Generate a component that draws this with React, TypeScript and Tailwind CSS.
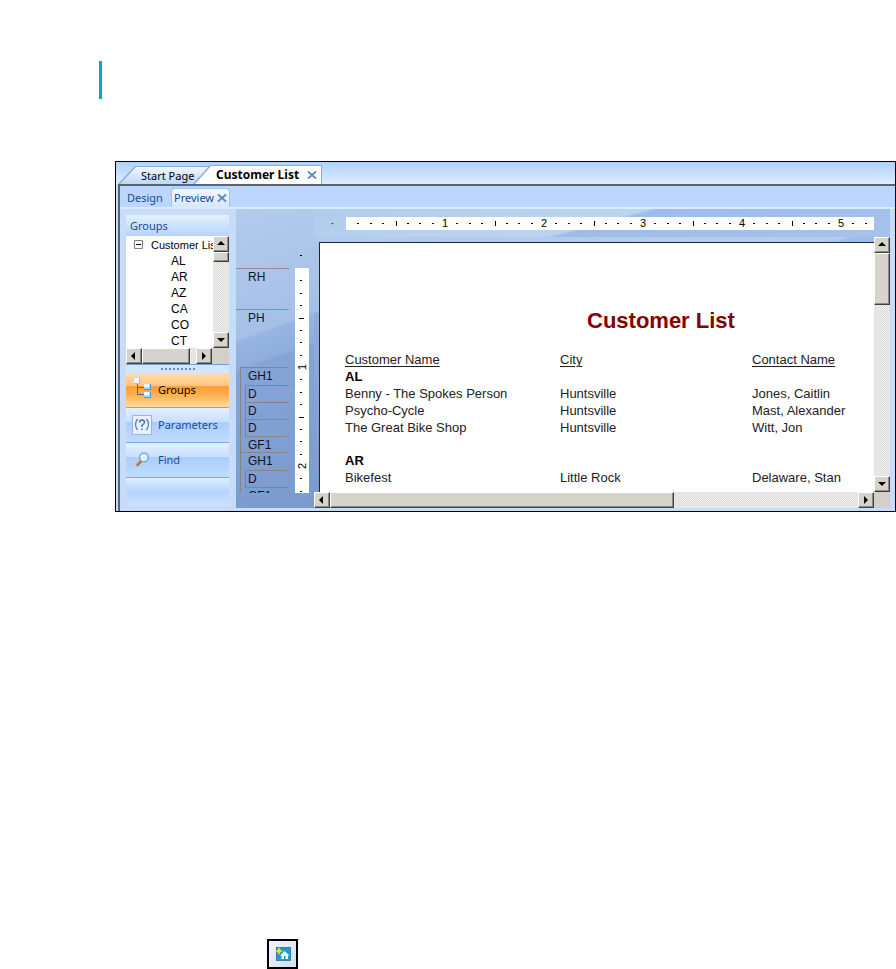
import type { ReactNode } from "react";
import clsx from "clsx";

const STATES = ["AL", "AR", "AZ", "CA", "CO", "CT"];

const REPORT = [
  {
    state: "AL",
    customers: [
      ["Benny - The Spokes Person", "Huntsville", "Jones, Caitlin"],
      ["Psycho-Cycle", "Huntsville", "Mast, Alexander"],
      ["The Great Bike Shop", "Huntsville", "Witt, Jon"],
    ],
  },
  {
    state: "AR",
    customers: [["Bikefest", "Little Rock", "Delaware, Stan"]],
  },
];

const INCH = 99;

export default function App() {
  return (
    <div className="bg-white font-['Noto_Sans','Open_Sans',sans-serif] text-[11px] leading-4 text-black">
      <div className="pt-[61px] pl-[99px]">
        <div className="w-[3px] h-[38px] bg-[#0ba3d4]" />
      </div>

      <main className="mt-[62px] ml-[115px] border border-black bg-[#c4dcfb]">
        <DocumentTabs />
        <div className="ml-0.5 border-t-2 border-l-2 border-[#5c6470]">
          <ViewTabs />
          <div className="flex border-t-2 border-[#dceafe] bg-[#c6dcf8] pr-[5px] pb-[3px]">
            <Sidebar />
            <Canvas />
          </div>
        </div>
      </main>

      <div className="mt-[427px] ml-[267px]">
        <button
          type="button"
          aria-label="Insert picture"
          className="flex w-[31px] h-[30px] items-center justify-center border-2 border-black bg-linear-to-br from-[#f2f6fd] to-[#cfdff5]"
        >
          <PictureIcon />
        </button>
      </div>
    </div>
  );
}

/* ── Tabs ────────────────────────────────────────────────────── */

function DocumentTabs() {
  return (
    <div className="flex h-[22px] items-end bg-linear-to-b from-[#aed2fd] to-[#deecff] pl-0.5">
      <button
        type="button"
        className="h-[18px] w-[99px] bg-[#86aee0] pt-px [clip-path:polygon(17px_0,92px_0,100%_100%,0_100%)]"
      >
        <span className="flex h-full items-center bg-linear-to-b from-[#f4f8ff] to-[#bcd8fb] pl-[23px] [clip-path:polygon(18px_0,91px_0,100%_100%,2px_100%)]">
          Start Page
        </span>
      </button>
      <div className="z-10 -ml-6 h-[19px] w-[129px] bg-[#86aee0] pt-px pr-px [clip-path:polygon(17px_0,100%_0,100%_100%,0_100%)]">
        <div className="flex h-full items-center justify-between bg-white pr-1 pl-[23px] [clip-path:polygon(18px_0,100%_0,100%_100%,2px_100%)]">
          <button type="button" className="text-[12px] font-bold">Customer List</button>
          <CloseButton label="Close Customer List" />
        </div>
      </div>
    </div>
  );
}

function ViewTabs() {
  return (
    <div className="flex h-[21px] items-end bg-[#bbd7ff] pl-[7px] text-[#1d4a94]">
      <button type="button" className="h-[18px] w-11 text-left">Design</button>
      <div className="flex h-[19px] w-[59px] items-center justify-between rounded-t-sm border border-b-0 border-[#9cc7ee] bg-linear-to-b from-[#f4f9ff] to-[#d5e7fd] px-0.5">
        <button type="button">Preview</button>
        <CloseButton label="Close Preview" />
      </div>
    </div>
  );
}

function CloseButton({ label }: { label: string }) {
  return (
    <button type="button" aria-label={label} className="text-[#5f86c0]">
      <svg className="size-[10px]" viewBox="0 0 10 10" stroke="currentColor" strokeWidth="1.7">
        <path d="M1 1.5 9 8.5M9 1.5 1 8.5" />
      </svg>
    </button>
  );
}

/* ── Sidebar ─────────────────────────────────────────────────── */

function Sidebar() {
  return (
    <aside className="flex w-[116px] shrink-0 flex-col pt-1.5 pr-[7px] pb-0.5 pl-1.5">
      <h2 className="flex h-[21px] items-center bg-linear-to-b from-[#e6f1ff] to-[#b5d3ff] pl-1 text-[#1d4a94]">
        Groups
      </h2>
      <div className="flex h-28 bg-white font-['Liberation_Sans',Arial,sans-serif] text-[12px]">
        <ul className="min-w-0 flex-1 overflow-hidden">
          <li>
            <div className="flex h-[17px] items-center gap-2 pl-2 text-[11px] whitespace-nowrap">
              <svg className="size-[9px] shrink-0" viewBox="0 0 9 9" fill="none">
                <path d="M.5.5h8v8h-8z" stroke="#808080" />
                <path d="M2 4.5h5" stroke="#000" />
              </svg>
              Customer List
            </div>
            <ul className="pl-[45px]">
              {STATES.map((s) => (
                <li key={s} className="h-4">{s}</li>
              ))}
            </ul>
          </li>
        </ul>
        <Scrollbar vertical thumb="h-2.5" />
      </div>
      <div className="flex bg-[#d4d0c8] pr-[17px]">
        <Scrollbar thumb="w-12" />
      </div>
      <div className="flex h-[9px] items-center justify-center gap-0.5 border-t border-[#6f9fe0] bg-[#d5e6fc]">
        {Array.from({ length: 9 }, (_, i) => (
          <span key={i} className="size-0.5 bg-[#5b8edb]" />
        ))}
      </div>
      <NavButton icon={<TreeIcon />} label="Groups" active />
      <NavButton icon={<ParameterIcon />} label="Parameters" />
      <NavButton icon={<FindIcon />} label="Find" />
      <div className="flex-1 bg-linear-to-b from-[#e0eeff] via-[#b5d4ff] to-[#cbe2ff]" />
    </aside>
  );
}

function NavButton({ icon, label, active }: { icon: ReactNode; label: string; active?: boolean }) {
  return (
    <button
      type="button"
      className={clsx(
        "flex h-[35px] items-center gap-1.5 border-b pl-1.5",
        active
          ? "border-[#c99a5e] bg-[linear-gradient(#ffdfae,#ffc47e_38%,#ff9c35_40%,#ffb658_70%,#ffe09c)] text-black"
          : "border-[#7ba8e4] bg-[linear-gradient(#e4f0ff,#c8dfff_40%,#aacdff_42%,#c2dcff)] text-[#1d4a94]",
      )}
    >
      {icon}
      {label}
    </button>
  );
}

/* ── Report canvas ───────────────────────────────────────────── */

function Canvas() {
  return (
    <section className="flex min-w-0 flex-1 bg-[#7b9bcf]">
      <div className="flex w-[78px] shrink-0 bg-[linear-gradient(160deg,#b3ccec,#a5c0e7_40%,#97b5e1_41%,#8eaedc_49%,#85a5d7_50%,#7b9bcf)]">
        <Sections />
        <div className="ml-1.5 w-3.5 pt-[59px]">
          <VerticalRuler />
        </div>
      </div>
      <div className="flex min-w-0 flex-1 flex-col">
        <div className="flex h-7 items-start bg-[linear-gradient(165deg,#b1cbec,#bbd5f0_49%,#9dbde9_51%,#a6c2ea)] pt-2 pr-4">
          <span className="w-8 shrink-0 pl-[17px] text-[10px] leading-3">·</span>
          <HorizontalRuler />
        </div>
        <div className="flex h-[255px]">
          <div className="flex min-w-0 flex-1 bg-[linear-gradient(165deg,#b1cbec,#b4cdef_35%,#9dbde9_36%,#a6c2ea)]">
            <div className="w-[5px] bg-[linear-gradient(#adc7ea,#a5c0e7_29%,#8eaedc_30%,#7b9bcf)]" />
            <div className="min-w-0 flex-1 pt-[5px]">
              <ReportPage />
            </div>
          </div>
          <Scrollbar vertical thumb="h-[52px]" />
        </div>
        <div className="flex bg-[#d4d0c8] pr-4">
          <Scrollbar thumb="w-[344px]" />
        </div>
      </div>
    </section>
  );
}

function Sections() {
  return (
    <div className="h-[284px] w-[53px] shrink-0 overflow-hidden pt-[59px] font-['Liberation_Sans',Arial,sans-serif] text-[12px] text-[#10141c]">
      <div className="h-[41px] border-t border-[#8d8d8d] pl-3">RH</div>
      <div className="h-[58px] border-t border-[#8d8d8d] pl-3">PH</div>
      <SectionGroup details={3} />
      <SectionGroup details={1} />
    </div>
  );
}

function SectionGroup({ details }: { details: number }) {
  return (
    <div className="ml-1 border-t border-l border-[#858585]">
      <div className="h-[17px] pl-[7px]">GH1</div>
      <div className="ml-1 border-l border-[#858585]">
        {Array.from({ length: details }, (_, i) => (
          <div key={i} className="h-[17px] border-t border-[#858585] pl-0.5">D</div>
        ))}
      </div>
      <div className="ml-1 h-4 border-t border-[#858585] pl-[3px]">GF1</div>
    </div>
  );
}

function HorizontalRuler() {
  return (
    <svg className="h-[13px] min-w-0 flex-1 bg-white font-['Liberation_Sans',Arial,sans-serif] text-[11px]">
      {Array.from({ length: 42 }, (_, i) => {
        const n = i + 1;
        const x = Math.round((n * INCH) / 8);
        if (n % 8 === 0) return <text key={n} x={x} y="10" textAnchor="middle">{n / 8}</text>;
        if (n % 4 === 0) return <rect key={n} x={x} y="4" width="1" height="5" />;
        return <rect key={n} x={x - 1} y="6" width="2" height="1" />;
      })}
    </svg>
  );
}

function VerticalRuler() {
  return (
    <svg className="h-[225px] w-3.5 overflow-visible bg-white font-['Liberation_Sans',Arial,sans-serif] text-[11px]">
      <rect x="5" y="-13" width="2" height="1" />
      {Array.from({ length: 18 }, (_, i) => {
        const n = i + 1;
        const y = Math.round((n * INCH) / 8);
        if (n % 8 === 0) {
          return (
            <text key={n} textAnchor="middle" transform={`translate(11 ${y}) rotate(-90)`}>
              {n / 8}
            </text>
          );
        }
        if (n % 4 === 0) return <rect key={n} x="4" y={y} width="5" height="1" />;
        return <rect key={n} x="5" y={y} width="2" height="1" />;
      })}
    </svg>
  );
}

function ReportPage() {
  return (
    <article className="h-[250px] overflow-hidden border-t border-l border-[#1e2530] bg-white pl-[25px] font-['Liberation_Sans',Arial,sans-serif] text-[13px] text-[#222]">
      <h1 className="mt-[66px] pl-[242px] text-[22px] leading-6 font-bold whitespace-nowrap text-[#850000]">
        Customer List
      </h1>
      <table className="mt-[18px] w-full table-fixed border-collapse text-left leading-[17px] whitespace-nowrap">
        <colgroup>
          <col className="w-[215px]" />
          <col className="w-48" />
          <col />
        </colgroup>
        <thead>
          <tr className="underline underline-offset-2">
            <th className="p-0 font-normal">Customer Name</th>
            <th className="p-0 font-normal">City</th>
            <th className="p-0 font-normal">Contact Name</th>
          </tr>
        </thead>
        {REPORT.map((group) => (
          <tbody key={group.state}>
            <tr>
              <th colSpan={3} className="p-0 font-bold text-black">{group.state}</th>
            </tr>
            {group.customers.map((row) => (
              <tr key={row[0]}>
                {row.map((cell) => (
                  <td key={cell} className="p-0">{cell}</td>
                ))}
              </tr>
            ))}
            <tr className="h-4"><td colSpan={3} className="p-0" /></tr>
          </tbody>
        ))}
      </table>
    </article>
  );
}

/* ── Scrollbar ───────────────────────────────────────────────── */

const BEVEL = "bg-[#d6d3ca] border border-t-white border-l-white border-r-[#404040] border-b-[#404040] shadow-[inset_-1px_-1px_0_#8d8b85]";

function Scrollbar({ vertical, thumb }: { vertical?: boolean; thumb: string }) {
  return (
    <div
      className={clsx(
        "flex bg-[repeating-conic-gradient(#dcdcda_0_25%,#efefef_0_50%)] bg-[length:2px_2px]",
        vertical ? "w-4 shrink-0 flex-col" : "h-4 min-w-0 flex-1",
      )}
    >
      <ScrollArrow label={vertical ? "Scroll up" : "Scroll left"} points={vertical ? "4,9 8,5 12,9" : "9,4 5,8 9,12"} />
      <div className={clsx(BEVEL, thumb)} />
      <div className="flex-1" />
      <ScrollArrow label={vertical ? "Scroll down" : "Scroll right"} points={vertical ? "4,6 8,10 12,6" : "6,4 10,8 6,12"} />
    </div>
  );
}

function ScrollArrow({ label, points }: { label: string; points: string }) {
  return (
    <button type="button" aria-label={label} className={clsx("size-4 shrink-0", BEVEL)}>
      <svg className="size-full" viewBox="1 1 14 14">
        <polygon points={points} />
      </svg>
    </button>
  );
}

/* ── Icons ───────────────────────────────────────────────────── */

function TreeIcon() {
  return (
    <svg className="mb-1 h-[22px] w-5 shrink-0" viewBox="0 0 20 22" fill="none">
      <path d="M5.5 7v10.500H12M5.500 10.500H12" stroke="#3c6a9c" />
      <path d="M2 1h6v6H2z" fill="#8cc8f8" />
      <path d="M2 1h5v5H2z" fill="#eaf7ff" />
      <path d="M12 7h7v6h-7zM12 15h7v6h-7z" fill="#3f9ae6" />
      <path d="M12 7h6v5h-6zM12 15h6v5h-6z" fill="#a8dafc" />
      <path d="M12 7h5v3h-5zM12 15h5v3h-5z" fill="#f2faff" />
    </svg>
  );
}

function ParameterIcon() {
  return (
    <svg className="size-5 shrink-0" viewBox="0 0 20 20" fill="none">
      <path d="M.5.5h19v19H.5z" fill="#e8f1fd" stroke="#94b8e6" />
      <path d="M5.500 4q-4 5.500 0 11M14.500 4q4 5.500 0 11" stroke="#4d80bd" strokeWidth="1.300" />
      <path d="M7.500 7.500Q7.500 5 10 5t2.500 2.300q0 1.500-2.500 3v1.700M10 13.500v1.500" stroke="#3d70b0" strokeWidth="1.400" />
    </svg>
  );
}

function FindIcon() {
  return (
    <svg className="size-5 shrink-0" viewBox="0 0 20 20" fill="none">
      <path d="m9 11-4.500 4.500" stroke="#a9683c" strokeWidth="3" />
      <path d="m8 10.500-4 4" stroke="#f0a55d" strokeWidth="1.500" />
      <circle cx="12" cy="7.500" r="4.300" fill="#d8f0ff" stroke="#6c9cd8" strokeWidth="1.300" />
      <path d="M9.700 7.500q0-2.500 2.500-2.500" stroke="#fff" strokeWidth="1.400" />
    </svg>
  );
}

function PictureIcon() {
  return (
    <svg className="h-[14px] w-4" viewBox="0 0 16 14">
      <rect x="1.500" y=".5" width="14" height="13" fill="#189fd0" stroke="#4a7a9c" />
      <path d="m4 0 1.300 2.700L8 4 5.300 5.300 4 8 2.700 5.300 0 4l2.700-1.300z" fill="#f2dc2c" />
      <path d="m9.500 4 5 4.500h-1.500V12h-2.500V9H9v3H6.500V8.500H5z" fill="#fff" />
    </svg>
  );
}
